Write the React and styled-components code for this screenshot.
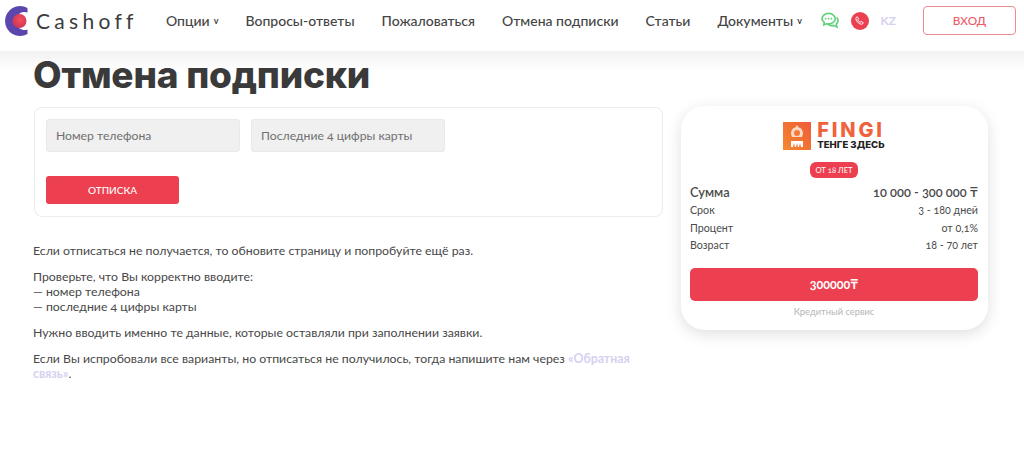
import styled, { createGlobalStyle } from 'styled-components';

const GlobalStyle = createGlobalStyle`
  html, body {
    margin: 0;
    padding: 0;
    background: #fff;
    font-family: 'Lato', 'Inter', 'Liberation Sans', sans-serif;
    font-feature-settings: 'onum';
    color: #444;
  }
  * {
    box-sizing: border-box;
  }
`;

const Page = styled.div`
  width: 1024px;
  height: 453px;
  overflow: hidden;
  background: #fff;
`;

const Header = styled.header`
  height: 51px;
  display: flex;
  align-items: center;
  padding: 0 8px 10px 4px;
  background: #fff;
`;

const Logo = styled.a`
  flex: 0 0 162px;
  display: flex;
  align-items: center;
  gap: 6px;
`;

const LogoText = styled.span`
  font-size: 21px;
  letter-spacing: 4.3px;
  color: #3c3c3c;
`;

const Nav = styled.nav`
  display: flex;
  align-items: center;
  gap: 27px;
  flex: 1;
`;

const NavItem = styled.a`
  display: flex;
  align-items: center;
  gap: 4px;
  font-size: 14px;
  font-weight: 500;
  color: #444;
  white-space: nowrap;
`;

const Caret = styled.span`
  font-size: 9px;
  font-weight: 700;
`;

const Contacts = styled.div`
  display: flex;
  align-items: center;
  gap: 12px;
  margin-right: 27px;
`;

const Lang = styled.span`
  font-size: 12px;
  font-weight: 700;
  color: #d6d0f0;
`;

const LoginButton = styled.button`
  width: 93px;
  height: 29px;
  border: 1px solid #ee8a93;
  border-radius: 4px;
  background: #fff;
  color: #ee5a66;
  font: 500 11.8px 'Lato', sans-serif;
`;

const Band = styled.div`
  height: 20px;
  background: linear-gradient(#f2f2f2, #fff);
`;

const Main = styled.main`
  margin-top: -20px;
  padding: 0 36px 0 33px;
`;

const Title = styled.h1`
  margin: 0 0 9px;
  height: 47px;
  line-height: 47px;
  font-family: 'Inter', sans-serif;
  font-size: 37px;
  font-weight: 800;
  letter-spacing: -0.2px;
  color: #3a3a3a;
  position: relative;
`;

const Columns = styled.div`
  display: flex;
  align-items: flex-start;
  gap: 18px;
`;

const Left = styled.div`
  width: 630px;
`;

const FormCard = styled.form`
  margin-left: 1px;
  height: 110px;
  padding: 11px;
  border: 1px solid #ececec;
  border-radius: 8px;
`;

const Fields = styled.div`
  display: flex;
  gap: 11px;
  margin-bottom: 24px;
`;

const Field = styled.div`
  width: 194px;
  height: 33px;
  padding-left: 9px;
  display: flex;
  align-items: center;
  border: 1px solid #e9e9e9;
  border-radius: 3px;
  background: #f0f0f0;
  font-size: 12.2px;
  color: #6f6f6f;
`;

const SubmitButton = styled.button`
  display: block;
  width: 133px;
  height: 28px;
  border: 0;
  border-radius: 3px;
  background: #ec3f4f;
  color: #fff;
  font: 500 10px 'Lato', sans-serif;
`;

const Copy = styled.div`
  margin-top: 26px;
  font-size: 12.3px;
  line-height: 15px;
  color: #484848;
`;

const Paragraph = styled.p`
  margin: 0 0 11px;
`;

const FeedbackLink = styled.a`
  font-weight: 700;
  color: #d6d0f0;
`;

const OfferCard = styled.aside`
  width: 307px;
  height: 224px;
  margin-top: -1px;
  padding: 15px 10px 0 9px;
  display: flex;
  flex-direction: column;
  border-radius: 24px;
  background: #fff;
  box-shadow: 0 4px 15px rgba(0, 0, 0, 0.13);
`;

const Brand = styled.div`
  display: flex;
  justify-content: center;
  align-items: center;
  gap: 6px;
  height: 30px;
`;

const BrandNames = styled.div`
  display: flex;
  flex-direction: column;
`;

const BrandName = styled.span`
  font-family: 'Inter', sans-serif;
  font-size: 20px;
  line-height: 17px;
  font-weight: 800;
  letter-spacing: 2.8px;
  color: #f0623c;
`;

const BrandTag = styled.span`
  font-family: 'Inter', sans-serif;
  font-size: 9.6px;
  line-height: 11px;
  font-weight: 800;
  color: #222;
`;

const Badge = styled.span`
  align-self: center;
  margin: 11px 0 5px;
  width: 48px;
  height: 16px;
  line-height: 16px;
  border-radius: 6px;
  background: #ec3f4f;
  color: #fff;
  font-size: 7.7px;
  text-align: center;
`;

const Row = styled.div`
  display: flex;
  justify-content: space-between;
  align-items: center;
  height: ${(p) => (p.$big ? 18 : 17.5)}px;
  font-size: ${(p) => (p.$big ? 12.8 : 10.7)}px;
  font-weight: ${(p) => (p.$big ? 600 : 400)};
  color: #4a4a4a;
`;

const OfferButton = styled.button`
  margin-top: 14px;
  height: 33px;
  border: 0;
  border-radius: 5px;
  background: #ec3f4f;
  color: #fff;
  font: 700 12.5px 'Lato', sans-serif;
  font-feature-settings: 'onum';
`;

const OfferNote = styled.div`
  margin-top: 5px;
  text-align: center;
  font-size: 9.3px;
  color: #b5b5b5;
`;

const LogoMark = () => (
  <svg width="26" height="30" viewBox="0 0 26 30">
    <defs>
      <radialGradient id="ball" cx="0.55" cy="0.4" r="0.7">
        <stop offset="0" stopColor="#f4505f" />
        <stop offset="1" stopColor="#c92f52" />
      </radialGradient>
    </defs>
    <path d="M23.500 2A15 15 0 1 0 23.500 28L23.500 23.500A9 9 0 1 1 23.500 6.500Z" fill="#5b46ae" />
    <circle cx="15.500" cy="15" r="7" fill="url(#ball)" />
  </svg>
);

const ChatIcon = () => (
  <svg width="18" height="18" viewBox="0 0 19 19" fill="none" stroke="#5fd07a" strokeWidth="1.7">
    <path d="M8 1.500c4 0 7 2.600 7 5.600s-3 5.600-7 5.600c-.8 0-1.500-.1-2.200-.3L3 13.600l.5-2.700C2 9.900 1 8.600 1 7.100 1 4.100 4 1.500 8 1.500Z" />
    <path d="M16.500 5.500c1 1 1.500 2.200 1.500 3.400 0 1.400-.7 2.700-1.800 3.600l.6 3.300-3.400-1.700c-2.400.6-5-.1-6.500-1.500" />
    <g fill="#5fd07a" stroke="none">
      <circle cx="5" cy="7.100" r=".9" />
      <circle cx="8" cy="7.100" r=".9" />
      <circle cx="11" cy="7.100" r=".9" />
    </g>
  </svg>
);

const PhoneIcon = () => (
  <svg width="18" height="18" viewBox="0 0 18 18">
    <circle cx="9" cy="9" r="9" fill="#ec3f4f" />
    <path
      d="M6.300 4.800l1.300 2.100-.8 1c.5 1.100 1.200 1.800 2.300 2.300l1-.8 2.100 1.300c-.2 1-.9 1.600-1.800 1.500-2.800-.3-5.200-2.700-5.500-5.500-.1-.9.400-1.700 1.400-1.900Z"
      fill="none"
      stroke="#fff"
      strokeWidth="1"
    />
  </svg>
);

const FingiMark = () => (
  <svg width="28" height="28" viewBox="0 0 28 28">
    <defs>
      <linearGradient id="fingi" x1="1" y1="0" x2="0" y2="1">
        <stop offset="0" stopColor="#ee5a3a" />
        <stop offset="1" stopColor="#f48a2e" />
      </linearGradient>
    </defs>
    <rect width="28" height="28" fill="url(#fingi)" />
    <path d="M14 3l1.800 2.500c3 .6 4.200 3.200 4.200 6.500l-1 3H9l-1-3c0-3.300 1.200-5.900 4.200-6.500Z" fill="#fbd9c4" />
    <circle cx="14" cy="11" r="3" fill="#f27a3c" />
    <path d="M8 19h12v6h-2l-1-4-1 4h-1l-1-4-1 4h-1l-1-4-1 4H8Z" fill="#fff" />
  </svg>
);

const navItems = [
  { label: 'Опции', caret: true },
  { label: 'Вопросы-ответы' },
  { label: 'Пожаловаться' },
  { label: 'Отмена подписки' },
  { label: 'Статьи' },
  { label: 'Документы', caret: true },
];

const terms = [
  ['Срок', '3 - 180 дней'],
  ['Процент', 'от 0,1%'],
  ['Возраст', '18 - 70 лет'],
];

const App = () => {
  return (
    <Page>
      <GlobalStyle />
      <Header>
        <Logo>
          <LogoMark />
          <LogoText>Cashoff</LogoText>
        </Logo>
        <Nav>
          {navItems.map((item) => (
            <NavItem key={item.label}>
              {item.label}
              {item.caret && <Caret>v</Caret>}
            </NavItem>
          ))}
        </Nav>
        <Contacts>
          <ChatIcon />
          <PhoneIcon />
          <Lang>KZ</Lang>
        </Contacts>
        <LoginButton>ВХОД</LoginButton>
      </Header>
      <Band />
      <Main>
        <Title>Отмена подписки</Title>
        <Columns>
          <Left>
            <FormCard>
              <Fields>
                <Field>Номер телефона</Field>
                <Field>Последние 4 цифры карты</Field>
              </Fields>
              <SubmitButton type="button">ОТПИСКА</SubmitButton>
            </FormCard>
            <Copy>
              <Paragraph>Если отписаться не получается, то обновите страницу и попробуйте ещё раз.</Paragraph>
              <Paragraph>
                Проверьте, что Вы корректно вводите:
                <br />— номер телефона
                <br />— последние 4 цифры карты
              </Paragraph>
              <Paragraph>Нужно вводить именно те данные, которые оставляли при заполнении заявки.</Paragraph>
              <Paragraph>
                Если Вы испробовали все варианты, но отписаться не получилось, тогда напишите нам через{' '}
                <FeedbackLink>«Обратная связь»</FeedbackLink>.
              </Paragraph>
            </Copy>
          </Left>
          <OfferCard>
            <Brand>
              <FingiMark />
              <BrandNames>
                <BrandName>FINGI</BrandName>
                <BrandTag>ТЕНГЕ ЗДЕСЬ</BrandTag>
              </BrandNames>
            </Brand>
            <Badge>ОТ 18 ЛЕТ</Badge>
            <Row $big>
              <span>Сумма</span>
              <span>10 000 - 300 000 ₸</span>
            </Row>
            {terms.map(([name, value]) => (
              <Row key={name}>
                <span>{name}</span>
                <span>{value}</span>
              </Row>
            ))}
            <OfferButton>300000₸</OfferButton>
            <OfferNote>Кредитный сервис</OfferNote>
          </OfferCard>
        </Columns>
      </Main>
    </Page>
  );
};

export default App;
